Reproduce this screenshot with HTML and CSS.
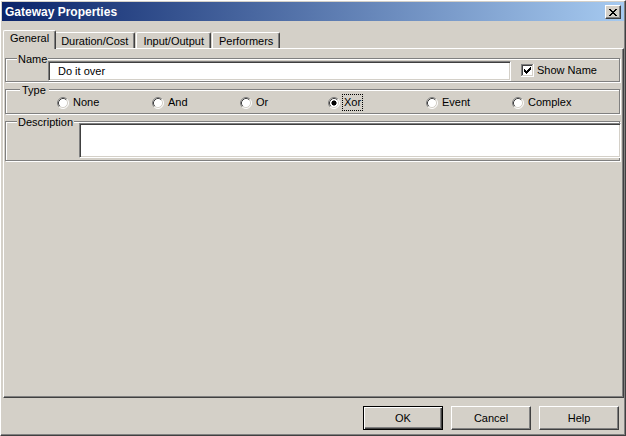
FILE: index.html
```html
<!DOCTYPE html>
<html>
<head>
<meta charset="utf-8">
<title>Gateway Properties</title>
<link rel="stylesheet" href="styles.css">
</head>
<body>
<div class="window">
  <div class="titlebar">
    <span class="title">Gateway Properties</span>
    <button class="close" type="button" aria-label="Close">
      <svg width="8" height="7" viewBox="0 0 8 7"><path fill="#000" d="M0 0h2v1H0zM6 0h2v1H6zM1 1h2v1H1zM5 1h2v1H5zM2 2h4v1H2zM3 3h2v1H3zM2 4h4v1H2zM1 5h2v1H1zM5 5h2v1H5zM0 6h2v1H0zM6 6h2v1H6z"/></svg>
    </button>
  </div>
  <div class="client">
    <div class="tabs">
      <div class="tab active">General</div>
      <div class="tab">Duration/Cost</div>
      <div class="tab">Input/Output</div>
      <div class="tab">Performers</div>
    </div>
    <div class="panel">
      <div class="group group-name">
        <span class="group-label">Name</span>
        <input class="textbox" type="text" value="Do it over">
        <label class="check">
          <svg class="checkbox" width="13" height="13" viewBox="0 0 13 13">
            <rect x="0" y="0" width="13" height="13" fill="#fff"/>
            <path fill="#808080" d="M0 0h12v1H1v11H0z"/>
            <path fill="#404040" d="M1 1h10v1H2v9H1z"/>
            <path fill="#d4d0c8" d="M11 1h1v11H1v-1h10z"/>
            <path fill="#000" d="M9 3h1v1H9zM8 4h2v1H8zM3 5h1v1H3zM7 5h3v1H7zM3 6h2v1H3zM6 6h3v1H6zM3 7h5v1H3zM4 8h3v1H4zM5 9h1v1H5z"/>
          </svg>
          <span>Show Name</span>
        </label>
      </div>
      <div class="group group-type">
        <span class="group-label label-type">Type</span>
        <div class="radios">
          <div class="radio"><svg class="radio-icon" width="12" height="12" viewBox="0 0 12 12"><circle cx="6" cy="6" r="5" fill="#fff"/><path d="M2.11 9.89A5.5 5.5 0 0 1 9.89 2.11" fill="none" stroke="#808080"/><path d="M9.89 2.11A5.5 5.5 0 0 1 2.11 9.89" fill="none" stroke="#fff"/><path d="M2.82 9.18A4.5 4.5 0 0 1 9.18 2.82" fill="none" stroke="#404040"/><path d="M9.18 2.82A4.5 4.5 0 0 1 2.82 9.18" fill="none" stroke="#d4d0c8"/></svg><span class="radio-text">None</span></div>
          <div class="radio"><svg class="radio-icon" width="12" height="12" viewBox="0 0 12 12"><circle cx="6" cy="6" r="5" fill="#fff"/><path d="M2.11 9.89A5.5 5.5 0 0 1 9.89 2.11" fill="none" stroke="#808080"/><path d="M9.89 2.11A5.5 5.5 0 0 1 2.11 9.89" fill="none" stroke="#fff"/><path d="M2.82 9.18A4.5 4.5 0 0 1 9.18 2.82" fill="none" stroke="#404040"/><path d="M9.18 2.82A4.5 4.5 0 0 1 2.82 9.18" fill="none" stroke="#d4d0c8"/></svg><span class="radio-text">And</span></div>
          <div class="radio"><svg class="radio-icon" width="12" height="12" viewBox="0 0 12 12"><circle cx="6" cy="6" r="5" fill="#fff"/><path d="M2.11 9.89A5.5 5.5 0 0 1 9.89 2.11" fill="none" stroke="#808080"/><path d="M9.89 2.11A5.5 5.5 0 0 1 2.11 9.89" fill="none" stroke="#fff"/><path d="M2.82 9.18A4.5 4.5 0 0 1 9.18 2.82" fill="none" stroke="#404040"/><path d="M9.18 2.82A4.5 4.5 0 0 1 2.82 9.18" fill="none" stroke="#d4d0c8"/></svg><span class="radio-text">Or</span></div>
          <div class="radio"><svg class="radio-icon" width="12" height="12" viewBox="0 0 12 12"><circle cx="6" cy="6" r="5" fill="#fff"/><path d="M2.11 9.89A5.5 5.5 0 0 1 9.89 2.11" fill="none" stroke="#808080"/><path d="M9.89 2.11A5.5 5.5 0 0 1 2.11 9.89" fill="none" stroke="#fff"/><path d="M2.82 9.18A4.5 4.5 0 0 1 9.18 2.82" fill="none" stroke="#404040"/><path d="M9.18 2.82A4.5 4.5 0 0 1 2.82 9.18" fill="none" stroke="#d4d0c8"/><rect x="4" y="4" width="4" height="4" fill="#000"/><path fill="#000" d="M5 3h2v1H5zM5 8h2v1H5zM3 5h1v2H3zM8 5h1v2H8z" opacity="0.5"/></svg><span class="radio-text focused">Xor</span></div>
          <div class="radio"><svg class="radio-icon" width="12" height="12" viewBox="0 0 12 12"><circle cx="6" cy="6" r="5" fill="#fff"/><path d="M2.11 9.89A5.5 5.5 0 0 1 9.89 2.11" fill="none" stroke="#808080"/><path d="M9.89 2.11A5.5 5.5 0 0 1 2.11 9.89" fill="none" stroke="#fff"/><path d="M2.82 9.18A4.5 4.5 0 0 1 9.18 2.82" fill="none" stroke="#404040"/><path d="M9.18 2.82A4.5 4.5 0 0 1 2.82 9.18" fill="none" stroke="#d4d0c8"/></svg><span class="radio-text">Event</span></div>
          <div class="radio"><svg class="radio-icon" width="12" height="12" viewBox="0 0 12 12"><circle cx="6" cy="6" r="5" fill="#fff"/><path d="M2.11 9.89A5.5 5.5 0 0 1 9.89 2.11" fill="none" stroke="#808080"/><path d="M9.89 2.11A5.5 5.5 0 0 1 2.11 9.89" fill="none" stroke="#fff"/><path d="M2.82 9.18A4.5 4.5 0 0 1 9.18 2.82" fill="none" stroke="#404040"/><path d="M9.18 2.82A4.5 4.5 0 0 1 2.82 9.18" fill="none" stroke="#d4d0c8"/></svg><span class="radio-text">Complex</span></div>
        </div>
      </div>
      <div class="group group-desc">
        <span class="group-label">Description</span>
        <textarea class="textarea"></textarea>
      </div>
    </div>
    <div class="footer">
      <button class="btn btn-default" type="button">OK</button>
      <button class="btn" type="button">Cancel</button>
      <button class="btn" type="button">Help</button>
    </div>
  </div>
</div>
</body>
</html>
```
FILE: styles.css
```css
* { box-sizing: border-box; }
html, body { margin: 0; padding: 0; }
body {
  width: 626px;
  height: 436px;
  overflow: hidden;
  background: #d4d0c8;
  font-family: "Liberation Sans", Arial, sans-serif;
  font-size: 11px;
  line-height: 13px;
  color: #000;
}
.window {
  width: 626px;
  height: 436px;
  display: flex;
  flex-direction: column;
  border: 1px solid;
  border-color: #fff #404040 #404040 #fff;
  box-shadow: inset -1px -1px 0 #808080;
  padding: 1px;
  background: #d4d0c8;
}
.titlebar {
  flex: none;
  height: 19px;
  display: flex;
  align-items: center;
  justify-content: space-between;
  padding: 1px 3px 0 3px;
  background: linear-gradient(to right, #0a246a, #a6caf0);
  color: #fff;
}
.title {
  font-weight: bold;
  font-size: 12px;
  line-height: 14px;
}
.close {
  width: 16px;
  height: 14px;
  padding: 0;
  margin: 0;
  border: 1px solid;
  border-color: #fff #404040 #404040 #fff;
  box-shadow: inset -1px -1px 0 #808080;
  background: #d4d0c8;
  display: flex;
  align-items: center;
  justify-content: center;
}
.close svg { display: block; }
.client {
  flex: 1;
  display: flex;
  flex-direction: column;
  padding-left: 1px;
}
.tabs {
  flex: none;
  height: 27px;
  display: flex;
  align-items: flex-end;
  padding-left: 2px;
}
.tab {
  height: 16px;
  padding: 2px 6px 0;
  border: 1px solid;
  border-bottom: 0;
  border-color: #fff #404040 #404040 #fff;
  box-shadow: inset -1px 0 0 #808080;
  border-radius: 2px 2px 0 0;
  margin-right: 1px;
  white-space: nowrap;
}
.tab.active {
  position: relative;
  z-index: 1;
  height: 19px;
  margin: 0 -2px -1px -2px;
  padding: 1px 6px 0;
  background: #d4d0c8;
}
.panel {
  flex: none;
  height: 350px;
  border: 1px solid;
  border-color: #fff #404040 #404040 #fff;
  box-shadow: inset -1px -1px 0 #808080;
  padding: 9px 3px 0 1px;
}
.group {
  position: relative;
  border: 1px solid #808080;
  box-shadow: 1px 1px 0 #fff, inset 1px 1px 0 #fff;
}
.group-label {
  position: absolute;
  top: -6px;
  left: 11px;
  padding: 0 1px;
  background: #d4d0c8;
  line-height: 13px;
}
.label-type { left: 14px; padding: 0 3px 0 2px; }
.group-name {
  height: 24px;
  display: flex;
  align-items: center;
  padding: 1px 0 0 42px;
}
.textbox {
  width: 463px;
  height: 20px;
  margin: 0;
  padding: 0 0 0 9px;
  border: 1px solid;
  border-color: #808080 #fff #fff #808080;
  box-shadow: inset 1px 1px 0 #404040, inset -1px -1px 0 #d4d0c8;
  background: #fff;
  font: inherit;
  color: #000;
  outline: none;
}
.check {
  display: flex;
  align-items: center;
  margin-left: 10px;
}
.checkbox { display: block; }
.check span { margin-left: 3px; }
.group-type {
  height: 25px;
  margin-top: 7px;
  padding: 4px 0 0 51px;
}
.radios {
  display: grid;
  grid-template-columns: 95px 88px 88px 98px 86px auto;
  align-items: center;
}
.radio {
  display: flex;
  align-items: center;
}
.radio-icon { display: block; flex: none; }
.radio-text {
  margin-left: 2px;
  padding: 1px;
  border: 1px dotted transparent;
}
.radio-text.focused { border-color: #000; }
.group-desc {
  height: 40px;
  margin-top: 7px;
  padding: 1px 0 0 73px;
  display: flex;
}
.textarea {
  display: block;
  width: 542px;
  height: 35px;
  margin: 0 -2px 0 0;
  padding: 0;
  resize: none;
  border: 1px solid;
  border-color: #808080 #fff #fff #808080;
  box-shadow: inset 1px 1px 0 #404040, inset -1px -1px 0 #d4d0c8;
  background: #fff;
  font: inherit;
  outline: none;
}
.footer {
  flex: 1;
  display: flex;
  justify-content: flex-end;
  align-items: flex-start;
  gap: 8px;
  padding: 8px 5px 0 0;
}
.btn {
  width: 80px;
  height: 24px;
  margin: 0;
  padding: 0;
  border: 1px solid;
  border-color: #fff #404040 #404040 #fff;
  box-shadow: inset -1px -1px 0 #808080;
  background: #d4d0c8;
  font: inherit;
  color: #000;
}
.btn-default {
  border-color: #000;
  box-shadow: inset 1px 1px 0 #fff, inset -1px -1px 0 #404040, inset -2px -2px 0 #808080;
}
```
